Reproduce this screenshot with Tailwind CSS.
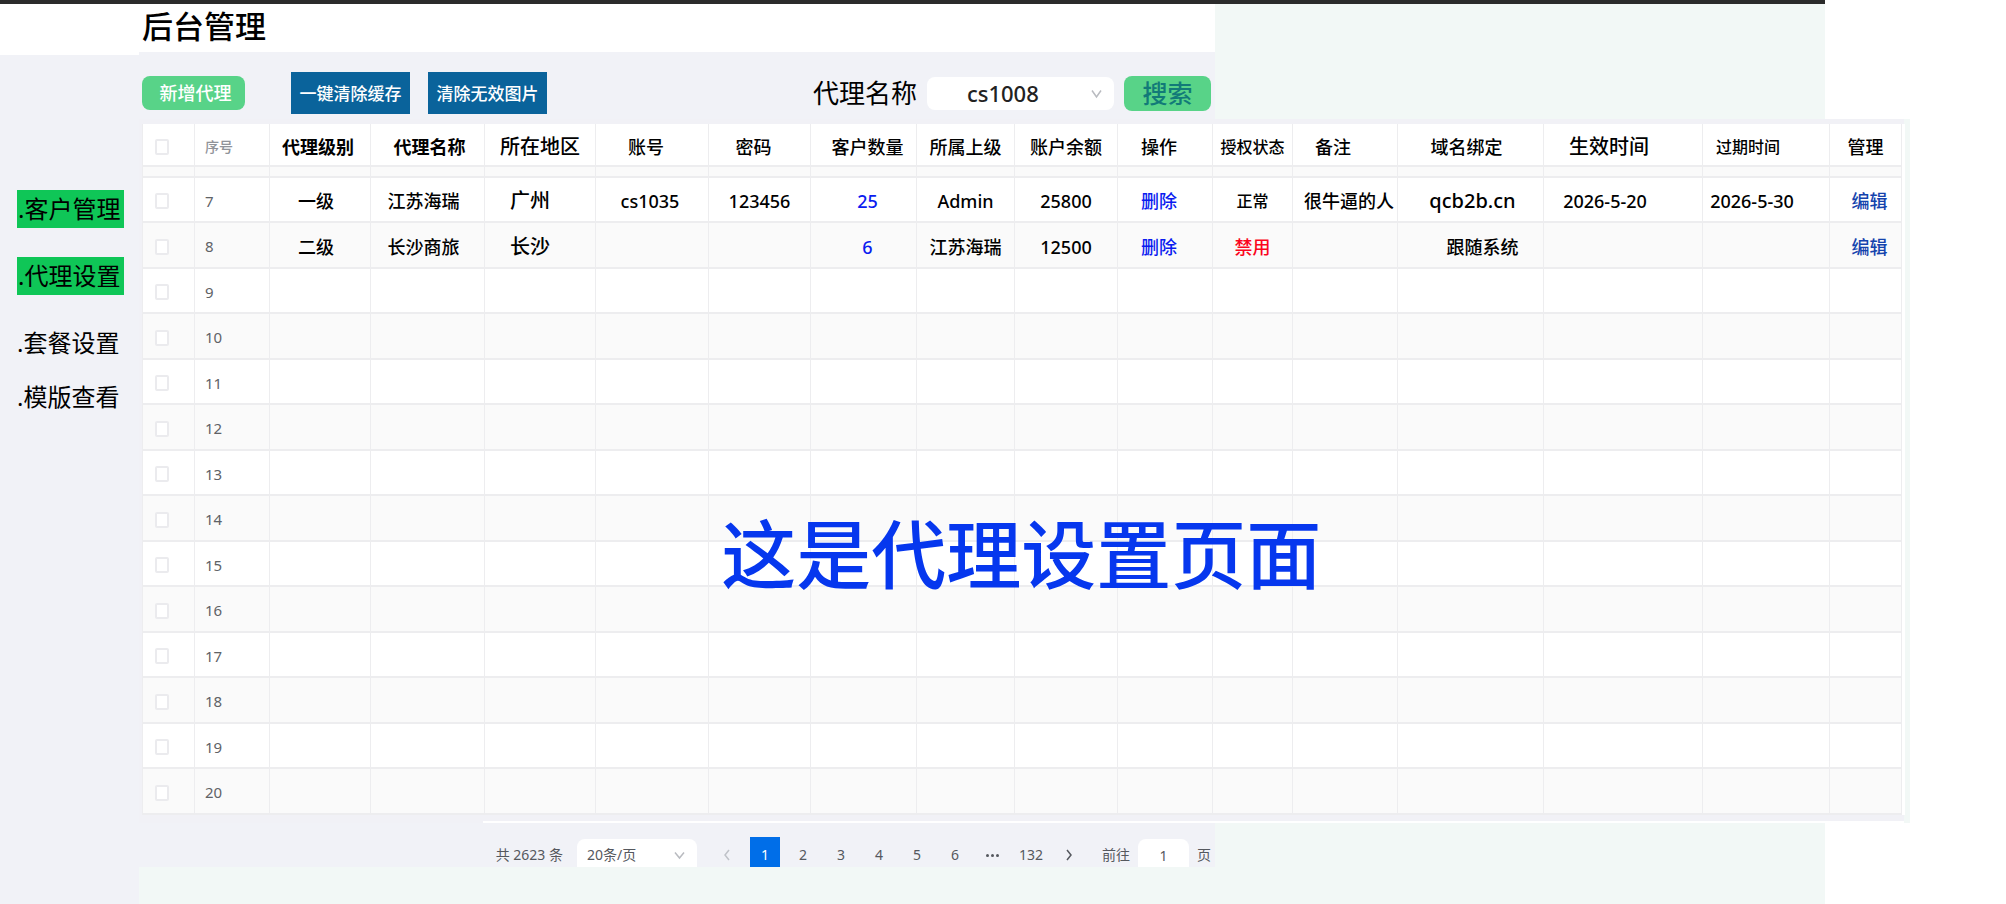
<!DOCTYPE html>
<html lang="zh-CN">
  <head>
    <meta charset="UTF-8" />
    <meta name="viewport" content="width=device-width, initial-scale=1.0" />
    <title>后台管理</title>
    <script src="https://cdn.jsdelivr.net/npm/@tailwindcss/browser@4"></script>
  </head>

  <body class="bg-white text-black font-['Noto_Sans','Noto_Sans_CJK_SC',sans-serif]">
    <div class="w-[91%] min-h-screen flex flex-col bg-[#f2f8f6]">
      <div class="h-1 bg-[#2b2b2b]"></div>

      <div class="flex flex-1">
        <!-- sidebar -->
        <aside class="w-[139px] shrink-0 bg-[#f1f2f7]">
          <div class="h-[51px] bg-white"></div>
          <nav class="flex flex-col items-start pl-[17px] pt-[135px] text-[24px] leading-[38px] whitespace-nowrap">
            <a href="#" class="w-[107px] pl-px bg-[#0fc657] mb-[29px]">.客户管理</a>
            <a href="#" class="w-[107px] pl-px bg-[#0fc657] mb-[29px]">.代理设置</a>
            <a href="#" class="w-[107px] mb-4">.套餐设置</a>
            <a href="#" class="w-[107px]">.模版查看</a>
          </nav>
        </aside>

        <main class="flex-1 min-w-0">
          <header class="w-[63.8%] h-12 bg-white pl-[3px]">
            <h1 class="text-[31px] leading-[44px] font-medium">后台管理</h1>
          </header>

          <!-- toolbar -->
          <div class="w-[63.8%] h-[67px] bg-[#f1f2f7] pl-[3px] pr-1 pt-[15px] flex items-center">
            <button class="w-[103px] h-[34px] rounded-lg bg-[#58d388] text-white text-[18px] leading-none font-medium pl-1">新增代理</button>
            <button class="w-[119px] h-[42px] ml-[46px] bg-[#0a639b] text-white text-[17px] leading-none font-medium">一键清除缓存</button>
            <button class="w-[119px] h-[42px] ml-[18px] bg-[#0a639b] text-white text-[17px] leading-none font-medium">清除无效图片</button>
            <label for="agent" class="ml-auto text-[26px] leading-none">代理名称</label>
            <div class="relative ml-[10px]">
              <select id="agent" class="w-[187px] h-[33px] rounded-lg bg-white appearance-none pl-10 text-[22px] leading-none font-medium text-[#222]">
                <option>cs1008</option>
              </select>
              <svg class="absolute right-3 top-3 w-[11px] h-[10px] pointer-events-none" viewBox="0 0 11 10" fill="none" stroke="#b9bbc0" stroke-width="1.5"><path d="M1 1.5 5.5 8 10 1.5" /></svg>
            </div>
            <button class="w-[87px] h-[35px] ml-[10px] rounded-lg bg-[#58d388] text-[#127a78] text-[25px] leading-none font-medium">搜索</button>
          </div>

          <!-- agent table -->
          <div class="relative w-[105%] pt-[5px] pl-[3px] border-r-[6px] border-[#f2f8f6] bg-[#f1f1f6]">
            <table class="w-full table-fixed border-separate border-spacing-0 bg-white text-center text-[18px] leading-none font-medium whitespace-nowrap border-r-[3px] border-white">
              <colgroup>
                <col class="w-[53px]" />
                <col class="w-[75px]" />
                <col class="w-[101px]" />
                <col class="w-[114px]" />
                <col class="w-[111px]" />
                <col class="w-[113px]" />
                <col class="w-[102px]" />
                <col class="w-[106px]" />
                <col class="w-[98px]" />
                <col class="w-[103px]" />
                <col class="w-[95px]" />
                <col class="w-[80px]" />
                <col class="w-[105px]" />
                <col class="w-[146px]" />
                <col class="w-[159px]" />
                <col class="w-[127px]" />
                <col class="w-[72px]" />
              </colgroup>
              <thead class="[&_th]:px-0 [&_th]:pb-0 [&_th]:pt-1 [&_th]:border-r [&_th]:border-b-2 [&_th]:border-[#ededef]">
                <tr class="h-[43px] [&_th]:font-medium">
                  <th class="border-l"><input type="checkbox" aria-label="全选" class="block ml-3 w-[14px] h-4 appearance-none rounded-xs border-2 border-[#ebebee] bg-white" /></th>
                  <th><div class="pl-[10px] text-left text-[14px] text-[#909399]">序号</div></th>
                  <th><div class="pr-1 font-bold">代理级别</div></th>
                  <th><div class="pl-1 font-bold">代理名称</div></th>
                  <th class="text-[20px]">所在地区</th>
                  <th><div class="pr-3">账号</div></th>
                  <th><div class="pr-3">密码</div></th>
                  <th><div class="pl-2">客户数量</div></th>
                  <th>所属上级</th>
                  <th>账户余额</th>
                  <th><div class="pr-3">操作</div></th>
                  <th class="text-[16px]">授权状态</th>
                  <th><div class="pr-6">备注</div></th>
                  <th><div class="pr-2">域名绑定</div></th>
                  <th class="text-[20px]"><div class="pr-7">生效时间</div></th>
                  <th class="text-[16px]"><div class="pr-9">过期时间</div></th>
                  <th>管理</th>
                </tr>
                <tr class="h-[11px] bg-[#fafafa] text-[0px]">
                  <th class="border-l"></th><th></th><th></th><th></th><th></th><th></th><th></th><th></th><th></th><th></th><th></th><th></th><th></th><th></th><th></th><th></th><th></th>
                </tr>
              </thead>
              <tbody id="rows" class="[&_td]:px-0 [&_td]:pb-0 [&_td]:pt-[3px] [&_td]:border-r [&_td]:border-b-2 [&_td]:border-[#ededef] [&>tr]:odd:h-[45px] [&>tr]:even:h-[46px] [&>tr]:even:bg-[#fafafa]">
                <tr>
                  <td class="border-l"><input type="checkbox" aria-label="选择 7" class="block ml-3 w-[14px] h-4 appearance-none rounded-xs border-2 border-[#ebebee] bg-white" /></td>
                  <td><div class="pl-[10px] text-left text-[15px] font-normal text-[#606266]">7</div></td>
                  <td><div class="pr-2">一级</div></td>
                  <td><div class="pr-2">江苏海瑞</div></td>
                  <td class="text-[20px]"><div class="pr-5">广州</div></td>
                  <td><div class="pr-1">cs1035</div></td>
                  <td>123456</td>
                  <td><div class="pl-2"><a href="#" class="text-[#0a1cf0]">25</a></div></td>
                  <td>Admin</td>
                  <td>25800</td>
                  <td><div class="pr-3"><a href="#" class="text-[#0a1cf0]">删除</a></div></td>
                  <td class="text-[16px]">正常</td>
                  <td><div class="pl-2">很牛逼的人</div></td>
                  <td class="text-[20px]"><div class="pl-1">qcb2b.cn</div></td>
                  <td><div class="pr-9">2026-5-20</div></td>
                  <td><div class="pr-7">2026-5-30</div></td>
                  <td><div class="pl-2"><a href="#" class="text-[#1443ad]">编辑</a></div></td>
                </tr>
                <tr>
                  <td class="border-l"><input type="checkbox" aria-label="选择 8" class="block ml-3 w-[14px] h-4 appearance-none rounded-xs border-2 border-[#ebebee] bg-white" /></td>
                  <td><div class="pl-[10px] text-left text-[15px] font-normal text-[#606266]">8</div></td>
                  <td><div class="pr-2">二级</div></td>
                  <td><div class="pr-2">长沙商旅</div></td>
                  <td class="text-[20px]"><div class="pr-5">长沙</div></td>
                  <td></td>
                  <td></td>
                  <td><div class="pl-2"><a href="#" class="text-[#0a1cf0]">6</a></div></td>
                  <td>江苏海瑞</td>
                  <td>12500</td>
                  <td><div class="pr-3"><a href="#" class="text-[#0a1cf0]">删除</a></div></td>
                  <td class="text-[#fb0520]">禁用</td>
                  <td></td>
                  <td><div class="pl-6">跟随系统</div></td>
                  <td></td>
                  <td></td>
                  <td><div class="pl-2"><a href="#" class="text-[#1443ad]">编辑</a></div></td>
                </tr>
              </tbody>
            </table>
            <div class="h-2 ml-[341px] border-b-2 border-white"></div>

            <!-- page caption over the grid -->
            <p class="absolute left-[33%] top-[393px] text-[75px] leading-[84px] font-medium text-[#0637ee] whitespace-nowrap pointer-events-none">这是代理设置页面</p>
          </div>

          <!-- pagination -->
          <div class="w-[63.8%] h-11 bg-[#f1f2f7] pr-1 flex items-end justify-end text-[14px] leading-[24px] text-[#55585e] whitespace-nowrap">
            <span class="mr-[14px]">共 2623 条</span>
            <div class="relative mr-[15px]">
              <select aria-label="每页条数" class="block w-[120px] h-7 pl-[10px] pt-1 rounded-t-lg bg-white appearance-none text-[14px] leading-[24px]">
                <option>20条/页</option>
              </select>
              <svg class="absolute right-3 top-3 w-[11px] h-[9px] pointer-events-none" viewBox="0 0 11 9" fill="none" stroke="#b9bbc0" stroke-width="1.5"><path d="M1 1.5 5.5 7 10 1.5" /></svg>
            </div>
            <div class="flex items-end gap-2 mr-[18px] [&>button]:w-[30px] [&>button]:h-6">
              <button aria-label="上一页" class="flex items-center justify-center"><svg class="w-[6px] h-3" viewBox="0 0 6 12" fill="none" stroke="#bfc2c8" stroke-width="1.5"><path d="M5 1 1 6l4 5" /></svg></button>
              <div class="w-[30px] h-[30px] bg-[#006ee8] flex items-end"><button class="w-full h-6 text-white">1</button></div>
              <button>2</button>
              <button>3</button>
              <button>4</button>
              <button>5</button>
              <button>6</button>
              <button aria-label="更多" class="flex items-center justify-center"><svg class="w-[13px] h-[3px]" viewBox="0 0 13 3" fill="#55585e"><circle cx="1.5" cy="1.5" r="1.5" /><circle cx="6.5" cy="1.5" r="1.5" /><circle cx="11.5" cy="1.5" r="1.5" /></svg></button>
              <button>132</button>
              <button aria-label="下一页" class="flex items-center justify-center"><svg class="w-[6px] h-3" viewBox="0 0 6 12" fill="none" stroke="#55585e" stroke-width="1.5"><path d="M1 1l4 5-4 5" /></svg></button>
            </div>
            <label for="page">前往</label>
            <input id="page" type="text" value="1" class="w-[51px] h-7 mx-2 pt-1 rounded-t-lg bg-white text-center" />
            <span>页</span>
          </div>
        </main>
      </div>
    </div>

    <script>
      // rows with no agent yet
      const rows = document.getElementById("rows");
      for (let i = 9; i <= 20; i++) {
        const tr = document.createElement("tr");
        tr.innerHTML = `
          <td class="border-l"><input type="checkbox" aria-label="选择 ${i}" class="block ml-3 w-[14px] h-4 appearance-none rounded-xs border-2 border-[#ebebee] bg-white" /></td>
          <td><div class="pl-[10px] text-left text-[15px] font-normal text-[#606266]">${i}</div></td>
          ${"<td></td>".repeat(15)}`;
        rows.append(tr);
      }
    </script>
  </body>
</html>
